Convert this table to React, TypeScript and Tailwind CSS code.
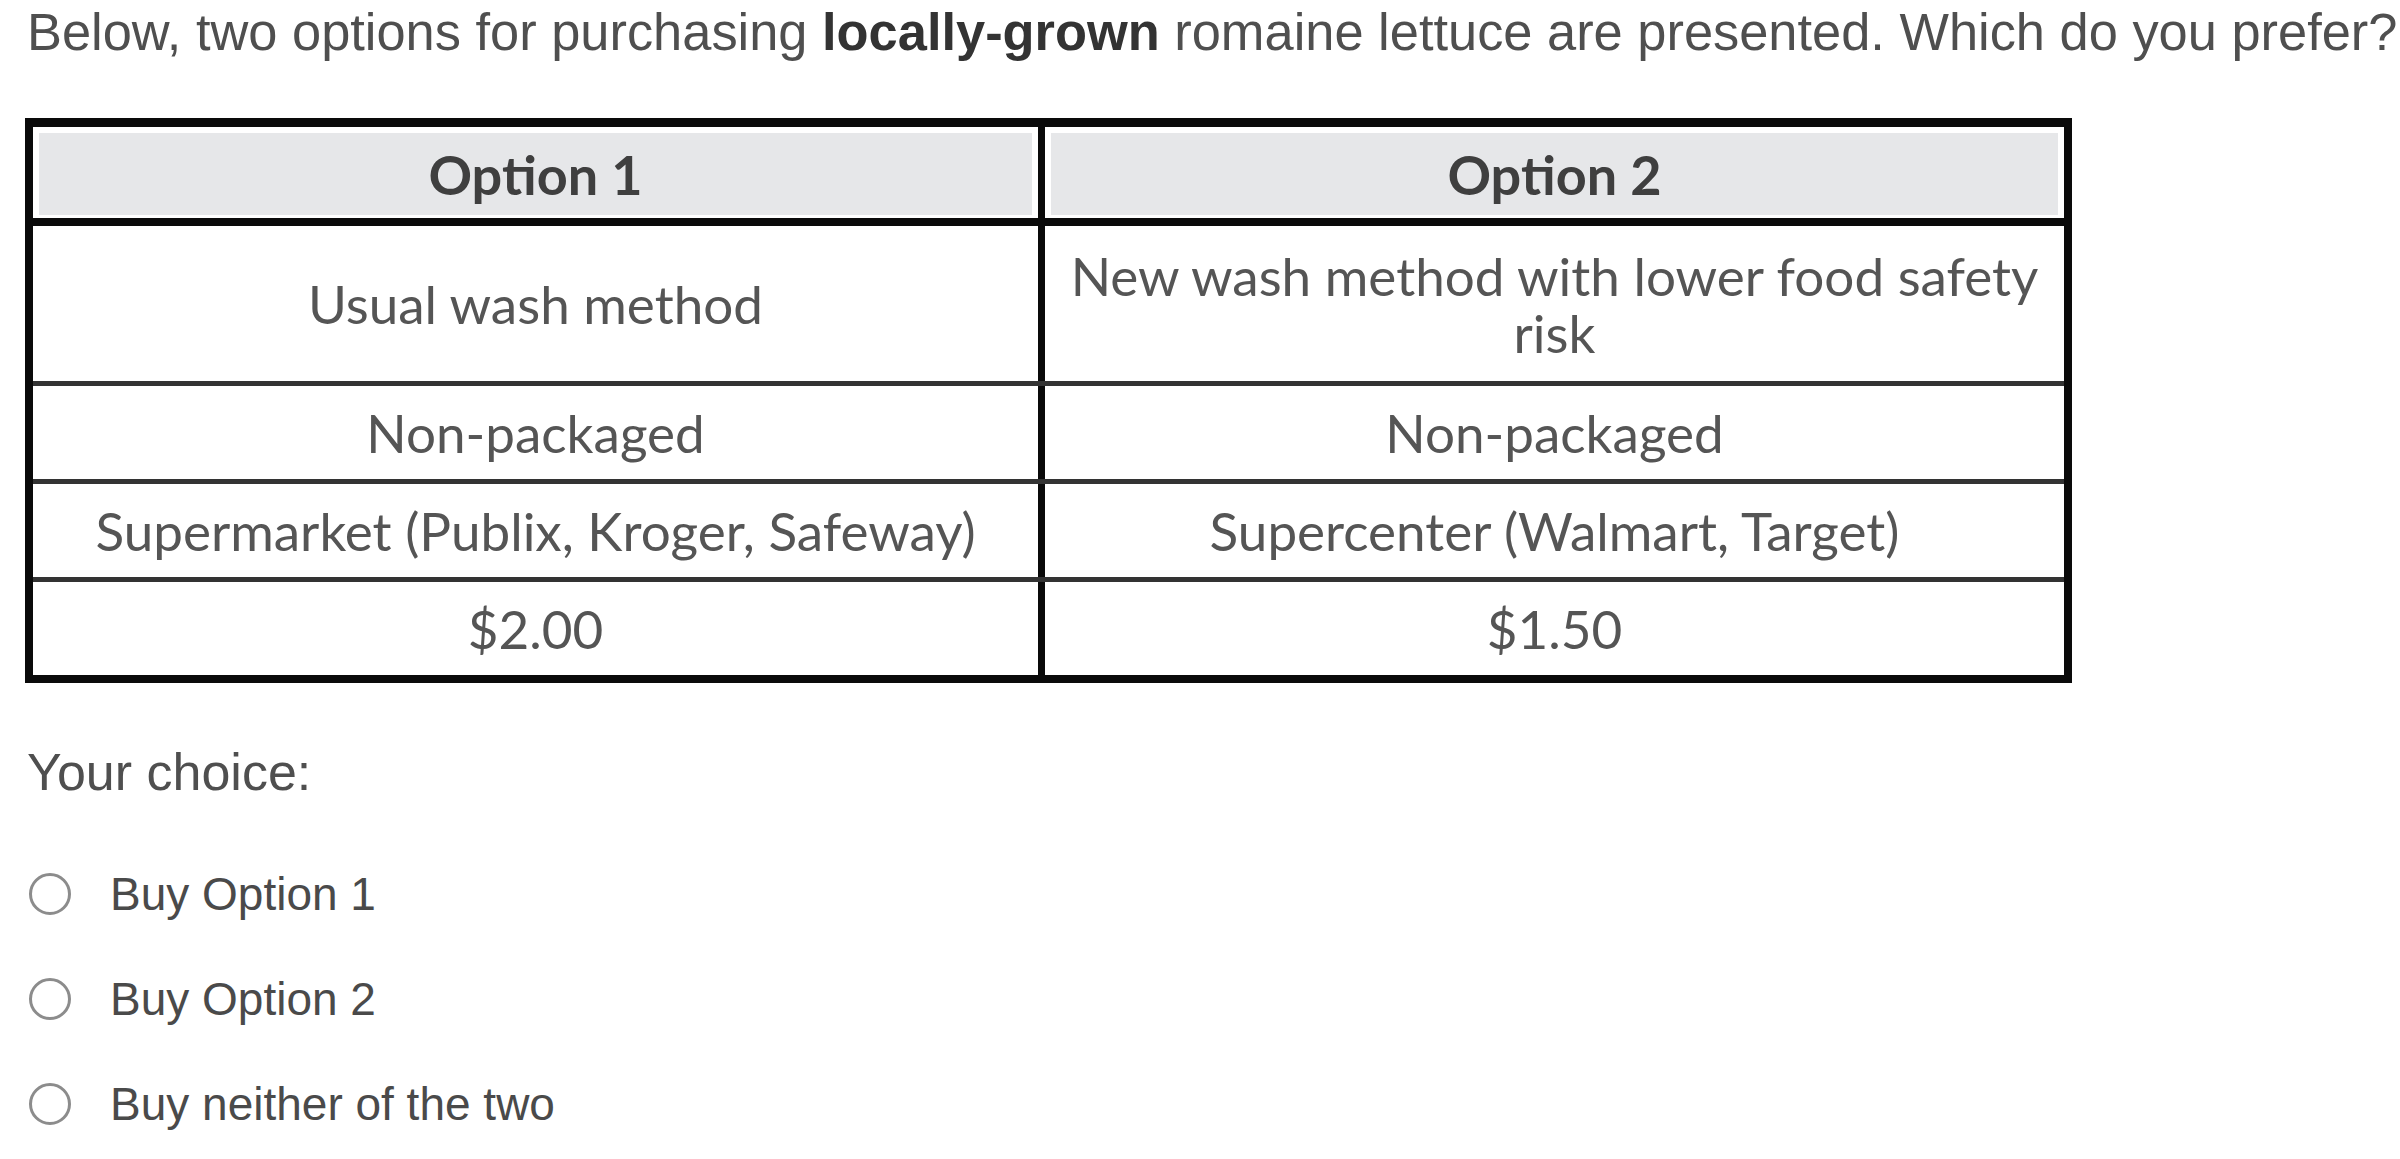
import React from "react";

const rows: [string, string][] = [
  ["Non-packaged", "Non-packaged"],
  ["Supermarket (Publix, Kroger, Safeway)", "Supercenter (Walmart, Target)"],
  ["$2.00", "$1.50"],
];

function Radio({ label }: { label: string }) {
  return (
    <label className="flex items-center h-[60px]">
      <span className="w-[42px] h-[42px] rounded-full border-[3px] border-[#8c8c8c] bg-white ml-[29px] shrink-0" />
      <span className="ml-[39px] text-[46px] leading-[60px] text-[#4a4a4a]">{label}</span>
    </label>
  );
}

export default function App() {
  return (
    <div className="w-[2400px] h-[1159px] bg-white overflow-hidden font-['Liberation_Sans',Arial,sans-serif]">
      <p className="pt-[2px] pl-[27px] text-[52.4px] leading-[60px] text-[#4f4f4f] whitespace-nowrap">
        Below, two options for purchasing <b className="font-bold text-[#333]">locally-grown</b> romaine lettuce are presented. Which do you prefer?
      </p>

      <div className="mt-[56px] ml-[25px] w-[2047px] border-[8px] border-t-[9px] border-[#0a0a0a] font-['Lato','Open_Sans',sans-serif] text-[53px] text-[#555]">
        <div className="grid grid-cols-[1005px_1fr] h-[91px]">
          <div className="pt-[6px] pb-[3px] px-[6px]">
            <div className="h-full bg-[#e6e7e9] flex items-center justify-center font-bold text-[54px] text-[#3f3f3f]">Option 1</div>
          </div>
          <div className="border-l-[7px] border-[#0a0a0a] pt-[6px] pb-[3px] px-[6px]">
            <div className="h-full bg-[#e6e7e9] flex items-center justify-center font-bold text-[54px] text-[#3f3f3f]">Option 2</div>
          </div>
        </div>
        <div className="grid grid-cols-[1005px_1fr] h-[163px] border-t-[8px] border-[#0a0a0a]">
          <div className="flex items-center justify-center text-center leading-[57px] px-[20px]">Usual wash method</div>
          <div className="border-l-[7px] border-[#0a0a0a] flex items-center justify-center text-center leading-[57px] px-[16px]">
            New wash method with lower food safety risk
          </div>
        </div>
        {rows.map(([a, b], i) => (
          <div key={i} className="grid grid-cols-[1005px_1fr] h-[98px] border-t-[5px] border-[#333]">
            <div className="flex items-center justify-center text-center leading-[57px]">{a}</div>
            <div className="border-l-[7px] border-[#0a0a0a] flex items-center justify-center text-center leading-[57px]">{b}</div>
          </div>
        ))}
      </div>

      <p className="mt-[60px] pl-[27px] text-[52px] leading-[58px] text-[#4f4f4f]">Your choice:</p>

      <div className="mt-[63px] flex flex-col gap-[45px]">
        <Radio label="Buy Option 1" />
        <Radio label="Buy Option 2" />
        <Radio label="Buy neither of the two" />
      </div>
    </div>
  );
}
